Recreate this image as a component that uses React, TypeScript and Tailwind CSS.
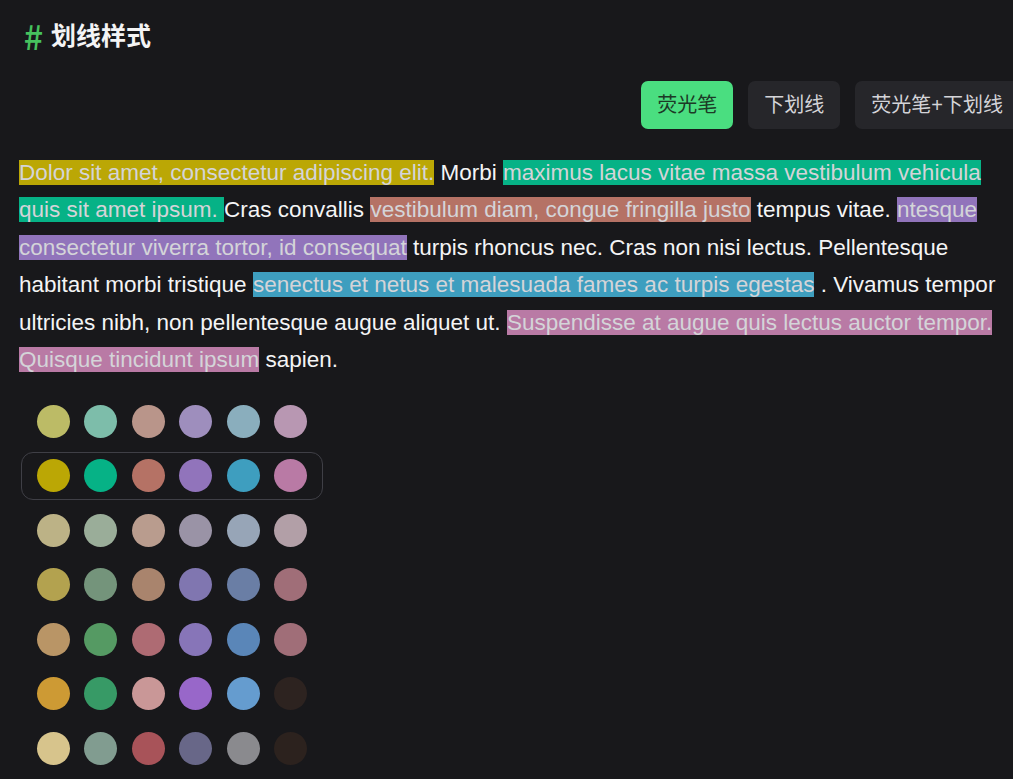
import React, { useState } from "react";

type Mode = "highlight" | "underline" | "both";

const palette: string[][] = [
  ["#bcbb66", "#7dbdaa", "#b9958a", "#9e8ebd", "#8aaebd", "#b897b2"],
  ["#bba705", "#06b286", "#b57265", "#9174bb", "#3e9ebf", "#b97aa5"],
  ["#bcb286", "#9aad99", "#b99c8e", "#9a93a6", "#97a5b7", "#b29fa7"],
  ["#b3a24f", "#74947b", "#a9846d", "#8076b0", "#6a7ea5", "#a06e78"],
  ["#b99566", "#559a63", "#ae6b73", "#8775b8", "#5a86b8", "#a06e78"],
  ["#cd9a34", "#379a66", "#c99797", "#9867c9", "#659ccf", "#2d2320"],
  ["#d7c48c", "#819c90", "#a85359", "#686788", "#8a8a8e", "#2c221e"],
];

const modes: { key: Mode; label: string }[] = [
  { key: "highlight", label: "荧光笔" },
  { key: "underline", label: "下划线" },
  { key: "both", label: "荧光笔+下划线" },
];

function Mark({ color, children }: { color: string; children: React.ReactNode }) {
  return (
    <span className="text-[#d4d4d8]" style={{ backgroundColor: color }}>
      {children}
    </span>
  );
}

export default function App() {
  const [mode, setMode] = useState<Mode>("highlight");
  const [row, setRow] = useState(1);
  const c = palette[row];

  return (
    <div className="min-h-screen w-full overflow-hidden bg-[#18181b] font-['Liberation_Sans','Noto_Sans_CJK_SC',sans-serif]">
      <h2 className="flex h-[54px] items-center gap-[6px] pl-[22px] pt-[18px] text-[25px] font-semibold text-[#f4f4f5]">
        <span className="w-[23px] text-center font-['Noto_Sans_CJK_SC',sans-serif] text-[34px] font-medium leading-none text-[#46c25e]">
          #
        </span>
        <span className="leading-none">划线样式</span>
      </h2>

      <div className="mt-[27px] -mr-[6px] flex justify-end gap-[15px]">
        {modes.map((m) => (
          <button
            key={m.key}
            onClick={() => setMode(m.key)}
            className={`h-[48px] shrink-0 whitespace-nowrap rounded-[7px] px-[16px] text-[20px] ${
              mode === m.key
                ? "bg-[#4ade80] text-[#1c3a26]"
                : "bg-[#26262a] text-[#d4d4d8]"
            }`}
          >
            {m.label}
          </button>
        ))}
      </div>

      <p className="mt-[25px] pl-[19px] pr-[12px] text-[22.5px] leading-[37.4px] text-[#f4f4f5]">
        <Mark color={c[0]}>Dolor sit amet, consectetur adipiscing elit.</Mark> Morbi{" "}
        <Mark color={c[1]}>maximus lacus vitae massa vestibulum vehicula quis sit amet ipsum. </Mark>
        Cras convallis <Mark color={c[2]}>vestibulum diam, congue fringilla justo</Mark> tempus vitae.{" "}
        <Mark color={c[3]}>ntesque consectetur viverra tortor, id consequat</Mark> turpis rhoncus nec. Cras non
        nisi lectus. Pellentesque habitant morbi tristique{" "}
        <Mark color={c[4]}>senectus et netus et malesuada fames ac turpis egestas</Mark> . Vivamus tempor ultricies
        nibh, non pellentesque augue aliquet ut.{" "}
        <Mark color={c[5]}>Suspendisse at augue quis lectus auctor tempor. Quisque tincidunt ipsum</Mark> sapien.
      </p>

      <div className="mt-[19px] ml-[21px] flex w-[302px] flex-col gap-[6.5px]">
        {palette.map((colors, i) => (
          <div
            key={i}
            onClick={() => setRow(i)}
            className={`flex h-[48px] cursor-pointer items-center gap-[14.4px] rounded-[12px] border px-[15px] ${
              row === i ? "border-[#3f3f46]" : "border-transparent"
            }`}
          >
            {colors.map((col, j) => (
              <span key={j} className="h-[33px] w-[33px] shrink-0 rounded-full" style={{ backgroundColor: col }} />
            ))}
          </div>
        ))}
      </div>
    </div>
  );
}
